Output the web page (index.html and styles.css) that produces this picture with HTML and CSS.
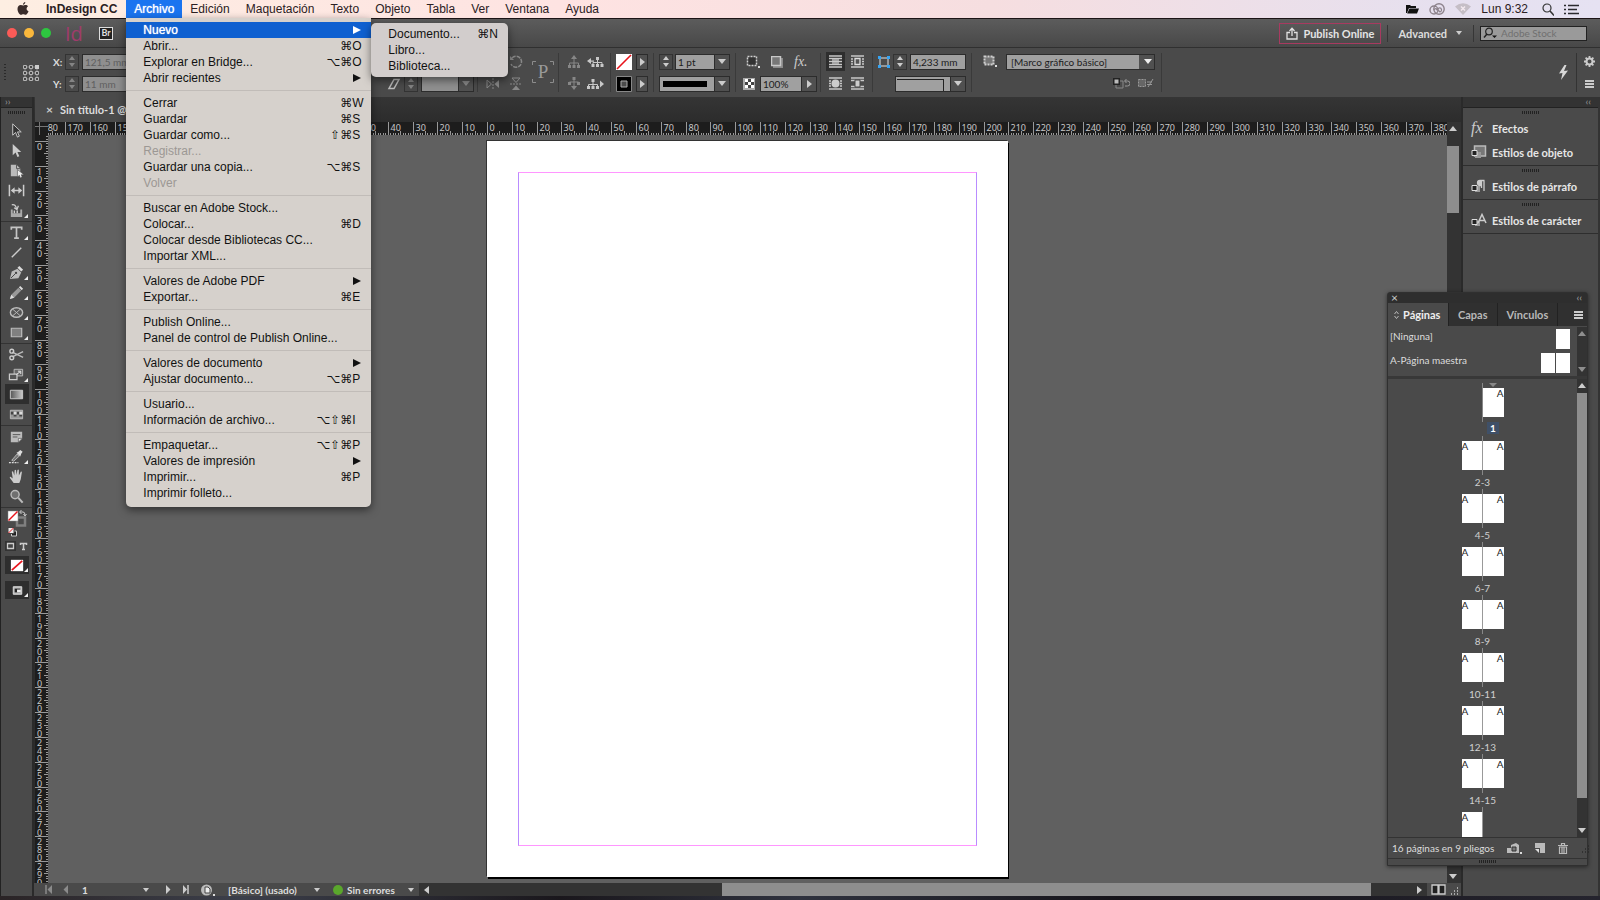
FILE: index.html
```
<!DOCTYPE html>
<html lang="es">
<head>
    <meta charset="UTF-8">
    <meta name="viewport" content="width=device-width, initial-scale=1.0">
    <title>InDesign CC</title>
    <link rel="stylesheet" href="styles.css">
</head>
<body>
    <header class="menubar">
        <svg class="apple" width="12" height="14" viewBox="0 0 12 14"><path d="M8.3 0c.1 1.300-1 2.600-2.300 2.700C5.900 1.500 7 .2 8.300 0zM6.200 3.500c.6 0 1.300-.6 2.400-.6 1 0 1.900.5 2.500 1.300-2.200 1.300-1.800 4.200.4 5-.5 1.500-1.700 3.500-2.900 3.500-.9 0-1.200-.5-2.300-.5s-1.400.5-2.300.5C2.500 12.700.5 9.500.5 6.900.5 4.400 2.100 3 3.700 3c1.100 0 1.900.5 2.500.5z" fill="#3a2c2a"/></svg>
        <nav class="menus">
            <button class="menu-title app">InDesign CC</button>
            <div class="menu-wrap">
                <button class="menu-title active">Archivo</button>
                <div class="menu file-menu">
                    <button class="item selected">Nuevo<i class="arrow"></i></button>
                    <button class="item">Abrir...<kbd>⌘<b>O</b></kbd></button>
                    <button class="item">Explorar en Bridge...<kbd>⌥⌘<b>O</b></kbd></button>
                    <button class="item">Abrir recientes<i class="arrow"></i></button>
                    <hr>
                    <button class="item">Cerrar<kbd>⌘<b>W</b></kbd></button>
                    <button class="item">Guardar<kbd>⌘<b>S</b></kbd></button>
                    <button class="item">Guardar como...<kbd>⇧⌘<b>S</b></kbd></button>
                    <button class="item" disabled>Registrar...</button>
                    <button class="item">Guardar una copia...<kbd>⌥⌘<b>S</b></kbd></button>
                    <button class="item" disabled>Volver</button>
                    <hr>
                    <button class="item">Buscar en Adobe Stock...</button>
                    <button class="item">Colocar...<kbd>⌘<b>D</b></kbd></button>
                    <button class="item">Colocar desde Bibliotecas CC...</button>
                    <button class="item">Importar XML...</button>
                    <hr>
                    <button class="item">Valores de Adobe PDF<i class="arrow"></i></button>
                    <button class="item">Exportar...<kbd>⌘<b>E</b></kbd></button>
                    <hr>
                    <button class="item">Publish Online...</button>
                    <button class="item">Panel de control de Publish Online...</button>
                    <hr>
                    <button class="item">Valores de documento<i class="arrow"></i></button>
                    <button class="item">Ajustar documento...<kbd>⌥⌘<b>P</b></kbd></button>
                    <hr>
                    <button class="item">Usuario...</button>
                    <button class="item">Información de archivo...<kbd>⌥⇧⌘<b>I</b></kbd></button>
                    <hr>
                    <button class="item">Empaquetar...<kbd>⌥⇧⌘<b>P</b></kbd></button>
                    <button class="item">Valores de impresión<i class="arrow"></i></button>
                    <button class="item">Imprimir...<kbd>⌘<b>P</b></kbd></button>
                    <button class="item">Imprimir folleto...</button>
                </div>
                <div class="menu submenu">
                    <button class="item">Documento...<kbd>⌘<b>N</b></kbd></button>
                    <button class="item">Libro...</button>
                    <button class="item">Biblioteca...</button>
                </div>
            </div>
            <button class="menu-title">Edición</button>
            <button class="menu-title">Maquetación</button>
            <button class="menu-title">Texto</button>
            <button class="menu-title">Objeto</button>
            <button class="menu-title">Tabla</button>
            <button class="menu-title">Ver</button>
            <button class="menu-title">Ventana</button>
            <button class="menu-title">Ayuda</button>
        </nav>
        <div class="tray">
            <svg width="13" height="10" viewBox="0 0 13 10"><path d="M0 9V1h4l1 1h5v2H3L1 9zM3.500 4.500H13L11 9.500H1.200z" fill="#111"/></svg>
            <svg width="16" height="12" viewBox="0 0 16 12"><circle cx="10" cy="6" r="5.200" fill="none" stroke="#8d838c" stroke-width="1.400"/><circle cx="5" cy="7" r="4" fill="none" stroke="#8d838c" stroke-width="1.400"/><path d="M5 7a2 2 0 0 1 3-1l3 3M7 7l3-2a2 2 0 1 1 1 4" fill="none" stroke="#8d838c" stroke-width="1.200"/></svg>
            <svg width="16" height="12" viewBox="0 0 16 12"><path d="M0 3.500Q8-3 16 3.500L8 12z" fill="#c5bec6"/><path d="M6 3.500l4 4m0-4l-4 4" stroke="#f4eaf0" stroke-width="1.400"/></svg>
            <span class="clock">Lun 9:32</span>
            <svg width="12" height="13" viewBox="0 0 12 13"><circle cx="5" cy="5" r="4" fill="none" stroke="#333" stroke-width="1.200"/><path d="M8 8l4 4.500" stroke="#333" stroke-width="1.500"/></svg>
            <svg width="16" height="11" viewBox="0 0 16 11"><path d="M0 1.500h2M4 1.500h11M0 5.500h2M4 5.500h9M0 9.500h2M4 9.500h11" stroke="#2a2a2e" stroke-width="1.600"/></svg>
        </div>
    </header>

    <div class="appbar">
        <span class="light red"></span><span class="light yellow"></span><span class="light green"></span>
        <span class="logo">Id</span>
        <button class="bridge">Br</button>
        <span class="spacer"></span>
        <button class="publish">
            <svg width="12" height="13" viewBox="0 0 12 13"><path d="M4 5.500H1v6.500h10V5.500H8M6 9V2M3.500 4L6 1.300 8.500 4" fill="none" stroke="#e0e0e0" stroke-width="1.300"/></svg>
            Publish Online
        </button>
        <span class="divider"></span>
        <button class="workspace-name">Advanced <i class="down small"></i></button>
        <span class="divider"></span>
        <label class="stock">
            <svg width="14" height="12" viewBox="0 0 14 12"><circle cx="6" cy="4.500" r="3.300" fill="none" stroke="#222" stroke-width="1.200"/><path d="M4 7L1 10.500" stroke="#222" stroke-width="1.500"/><path d="M9 8.500h5l-2.500 2.500z" fill="#111"/></svg>
            <input type="text" placeholder="Adobe Stock" aria-label="Adobe Stock">
        </label>
    </div>

    <div class="controlbar">
        <div class="ref">
            <i class="grip-v"></i>
            <svg width="18" height="18" viewBox="0 0 18 18"><path d="M3 3h12v12H3zM9 3v12M3 9h12" fill="none" stroke="#8c8c8c"/><g fill="#484848" stroke="#b4b4b4"><path d="M1.500 1.500h3v3h-3zM7.500 1.500h3v3h-3zM1.500 7.500h3v3h-3zM7.500 7.500h3v3h-3zM13.500 7.500h3v3h-3zM1.500 13.500h3v3h-3zM7.500 13.500h3v3h-3zM13.500 13.500h3v3h-3z"/></g><path d="M13 1h4v4h-4z" fill="#ccc"/></svg>
        </div>
        <div class="group position">
            <div class="row"><label for="px">X:</label><span class="step off"><i></i><i></i></span><input id="px" class="field" disabled value="121,5 mm"></div>
            <div class="row"><label for="py">Y:</label><span class="step off"><i></i><i></i></span><input id="py" class="field" disabled value="11 mm"></div>
        </div>
        <div class="group shear">
            <div class="row"></div>
            <div class="row">
                <svg width="14" height="12" viewBox="0 0 14 12"><path d="M2 10.500h5L12 1.500H7z" fill="none" stroke="#bbb" stroke-width="1.500"/></svg>
                <span class="step off"><i></i><i></i></span><span class="combo"><input class="field w38" disabled aria-label="Distorsión"><button class="drop off"><i class="down"></i></button></span>
            </div>
        </div>
        <div class="group flips">
            <div class="stack">
                <div class="row"><svg width="14" height="14" viewBox="0 0 14 14"></svg></div>
                <div class="row"><svg width="14" height="14" viewBox="0 0 14 14"><path d="M7 1v12" stroke="#888" stroke-dasharray="2 1"/><path d="M1 3l4.500 4L1 11z" fill="none" stroke="#888"/><path d="M13 3L8.500 7l4.500 4z" fill="#888"/></svg></div>
            </div>
            <div class="stack">
                <div class="row"><svg width="14" height="14" viewBox="0 0 14 14"><path d="M3 3a5.500 5.500 0 1 1-1 6" fill="none" stroke="#888" stroke-width="1.500" stroke-dasharray="4 1"/><path d="M1 1v4h4z" fill="#888"/></svg></div>
                <div class="row"><svg width="14" height="14" viewBox="0 0 14 14"><path d="M1 7h12" stroke="#888" stroke-dasharray="2 1"/><path d="M3 1l4 4.500L11 1z" fill="none" stroke="#888"/><path d="M3 13l4-4.500 4 4.500z" fill="#888"/></svg></div>
            </div>
            <svg class="big-p" width="22" height="22" viewBox="0 0 22 22"><path d="M.5 4V.5H4M18 .5h3.500V4M.5 18v3.500H4M18 21.500h3.500V18" fill="none" stroke="#8c8c8c"/><text x="11" y="17" text-anchor="middle">P</text></svg>
        </div>
        <div class="group trees">
            <div class="row">
                <svg class="dim" width="12" height="13" viewBox="0 0 12 13"><path d="M6 3v5M1.500 11V8h9v3M6 8v3" fill="none" stroke="#c4c4c4"/><path d="M3 4l3-4 3 4zM0 10h3v3H0zM4.500 10h3v3h-3zM9 10h3v3H9z" fill="#c4c4c4"/></svg>
                <svg width="17" height="12" viewBox="0 0 17 12"><path d="M10.500 3v4M6 9V6.500h9V9M10.500 6v3" fill="none" stroke="#c8c8c8"/><path d="M9 1h3v3H9zM4.500 8h3v3h-3zM9 8h3v3H9zM13.500 8h3v3h-3zM0 5l4-3v6zM3 4.500h4v1.300H3z" fill="#c8c8c8"/></svg>
            </div>
            <div class="row">
                <svg class="dim" width="12" height="13" viewBox="0 0 12 13"><path d="M6 1v8M1.500 7V5h9v2" fill="none" stroke="#c4c4c4"/><path d="M3 9l3 4 3-4zM0 5h3v3H0zM4.500 0h3v3h-3zM9 5h3v3H9z" fill="#c4c4c4"/></svg>
                <svg width="17" height="12" viewBox="0 0 17 12"><path d="M6 3v4M1.500 9V6.500h9V9M6 6v3" fill="none" stroke="#c8c8c8"/><path d="M4.500 1h3v3h-3zM0 8h3v3H0zM4.500 8h3v3h-3zM9 8h3v3H9zM17 6l-4-3.500v7z" fill="#c8c8c8"/></svg>
            </div>
        </div>
        <div class="group swatches">
            <div class="row"><svg width="16" height="16" viewBox="0 0 16 16"><path d="M0 0h16v16H0z" fill="#fff"/><path d="M1 15L15 1" stroke="#e8141c" stroke-width="1.600"/></svg><button class="drop narrow"><i class="right"></i></button></div>
            <div class="row"><svg width="16" height="16" viewBox="0 0 16 16"><path d="M.5.5h15v15H.5z" fill="#000" stroke="#888"/><path d="M5 5h6v6H5z" fill="#4a4a4a" stroke="#aaa"/></svg><button class="drop narrow"><i class="right"></i></button></div>
        </div>
        <div class="group weight">
            <div class="row"><span class="step"><i></i><i></i></span><span class="combo"><input class="field w40" value="1 pt" aria-label="Grosor"><button class="drop"><i class="down"></i></button></span></div>
            <div class="row"><span class="combo"><span class="field w56 stroke-style"></span><button class="drop"><i class="down"></i></button></span></div>
        </div>
        <div class="group effects">
            <div class="row">
                <svg width="14" height="14" viewBox="0 0 14 14"><path d="M1.500 1.500h9v9h-9z" fill="#333" stroke="#d0d0d0" stroke-width="1.500" stroke-dasharray="2 1"/><path d="M12 11h2v2h-2z" fill="#ddd"/></svg>
                <svg width="12" height="12" viewBox="0 0 12 12"><path d="M2 2h10v10H2z" fill="#8a8a8a"/><path d="M.5.5h9v9h-9z" fill="#777" stroke="#c8c8c8" stroke-width="1.500"/></svg>
                <span class="fx">fx.</span>
            </div>
            <div class="row">
                <svg width="12" height="12" viewBox="0 0 12 12"><path d="M0 0h12v12H0z" fill="#aaa"/><path d="M2 1h3v3H2zM8 1h3v3H8zM5 4h3v3H5zM2 7h3v3H2zM8 7h3v3H8z" fill="#fff"/><path d="M5 1h3v3H5zM2 4h3v3H2zM8 4h3v3H8zM5 7h3v3H5z" fill="#444"/></svg>
                <span class="combo"><input class="field w42" value="100%" aria-label="Opacidad"><button class="drop"><i class="right"></i></button></span>
            </div>
        </div>
        <div class="group wraps">
            <div class="row">
                <button class="tb on"><svg width="13" height="13" viewBox="0 0 13 13"><path d="M3 3h7v6H3z" fill="#999"/><path d="M0 1h13M0 3.500h13M0 6.500h13M0 9.500h13M0 12h13" stroke="#c8c8c8" stroke-width="1.300"/></svg></button>
                <button class="tb"><svg width="13" height="13" viewBox="0 0 13 13"><path d="M0 1h13M0 12h13M0 4h2M0 6.500h2M0 9h2M11 4h2M11 6.500h2M11 9h2" stroke="#c8c8c8" stroke-width="1.300"/><path d="M4 3.500h5v6H4z" fill="#555" stroke="#ddd" stroke-width="1.300"/></svg></button>
            </div>
            <div class="row">
                <button class="tb"><svg width="13" height="13" viewBox="0 0 13 13"><path d="M0 1h13M0 12h13M0 4h2M0 6.500h2M0 9h2M11 4h2M11 6.500h2M11 9h2" stroke="#c8c8c8" stroke-width="1.300"/><circle cx="6.500" cy="6.500" r="4" fill="#ccc"/></svg></button>
                <button class="tb"><svg width="13" height="13" viewBox="0 0 13 13"><path d="M0 1h13M0 3.500h13M0 9.500h13M0 12h13" stroke="#c8c8c8" stroke-width="1.300"/><path d="M4 3h5v7H4z" fill="#ccc" stroke="#444"/></svg></button>
            </div>
        </div>
        <div class="group corners">
            <div class="row">
                <svg width="12" height="12" viewBox="0 0 12 12"><path d="M2 2h8v8H2z" fill="none" stroke="#b0b0b0" stroke-width="1.500"/><path d="M0 0h3v3H0zM9 0h3v3H9zM0 9h3v3H0zM9 9h3v3H9z" fill="#35a4f4"/></svg>
                <span class="step"><i></i><i></i></span><input class="field w56" value="4,233 mm" aria-label="Tamaño de esquina">
            </div>
            <div class="row end"><span class="combo"><span class="field w56 corner-shape"></span><button class="drop"><i class="down"></i></button></span></div>
        </div>
        <div class="group styles">
            <div class="row">
                <svg width="14" height="13" viewBox="0 0 14 13"><path d="M1.500 1.500h9v8h-9z" fill="#777" stroke="#d0d0d0" stroke-width="2" stroke-dasharray="2 1"/><path d="M12 10h2v2h-2z" fill="#ddd"/></svg>
                <select class="field style-select" aria-label="Estilo de objeto"><option>[Marco gráfico básico]</option></select>
            </div>
            <div class="row end">
                <svg width="17" height="11" viewBox="0 0 17 11"><path d="M3 3h7v7H3z" fill="none" stroke="#888"/><path d="M0 0h7v7H0z" fill="#222"/><path d="M1.500 1.500h4v4h-4z" fill="#bbb"/><path d="M12 3h2.500a2 2 0 0 1 0 5H12M13.500 1L11.500 3l2 2" fill="none" stroke="#999"/></svg>
                <svg width="16" height="11" viewBox="0 0 16 11"><path d="M.5 1.500h7v7h-7z" fill="#666" stroke="#999" stroke-dasharray="2 1"/><path d="M9 4h5M9 6.500h5M15 1l-5 8" stroke="#999"/></svg>
            </div>
        </div>
        <span class="spacer"></span>
        <svg class="bolt" width="11" height="15" viewBox="0 0 11 15"><path d="M6.500 0L1 8.500l3.500-.5L3 15 10 5.500l-4 .5L8.500 0z" fill="#d8d8d8"/></svg>
        <div class="group last">
            <div class="row"><svg width="11" height="11" viewBox="0 0 11 11"><circle cx="5.500" cy="5.500" r="3" fill="none" stroke="#ccc" stroke-width="2"/><path d="M5.500 0v2.500M5.500 8.500V11M0 5.500h2.500M8.500 5.500H11M1.600 1.600l1.800 1.800M7.600 7.600l1.800 1.800M9.400 1.600L7.600 3.400M3.400 7.600L1.600 9.400" stroke="#ccc" stroke-width="1.800"/></svg></div>
            <div class="row"><i class="burger"></i></div>
        </div>
    </div>

    <main class="workspace">
        <aside class="tools">
            <div class="dock-head start">››</div>
            <i class="grip"></i>
            <div class="tool-group">
                <button class="tool"><svg viewBox="0 0 18 18"><path d="M5 2v12l3-3 2 5 2-1-2-4.500h4z" fill="#333" stroke="#ccc"/></svg></button>
                <button class="tool"><svg viewBox="0 0 18 18"><path d="M5 2v12l3-3 2 5 2-1-2-4.500h4z" fill="#ccc"/></svg></button>
                <button class="tool"><svg viewBox="0 0 18 18"><path d="M3 3h6l4 4v8H3z" fill="#bbb"/><path d="M9 3v4h4" fill="none" stroke="#555"/><path d="M10 8v8l2-2 1 3 2-1-1-2.500h3z" fill="#eee" stroke="#444" stroke-width=".6"/></svg></button>
                <button class="tool"><svg viewBox="0 0 18 18"><path d="M1.500 3v12M16.500 3v12M4 9h10" stroke="#ccc" stroke-width="1.600"/><path d="M3 9l4-3.500v7zM15 9l-4-3.500v7z" fill="#ccc"/></svg></button>
                <button class="tool more"><svg viewBox="0 0 18 18"><path d="M3 8v8h12V8h-2v4H5V8z" fill="#aaa"/><path d="M6 9h1.500v3H6zM9 9h1.500v3H9z" fill="#ccc"/><path d="M4 3q4-1 5 4M6.500 6l3 2L11 4" fill="none" stroke="#ccc" stroke-width="1.300"/></svg></button>
            </div>
            <div class="tool-group">
                <button class="tool more"><svg viewBox="0 0 18 18"><path d="M3.500 6V3.500h11V6M9 3.500V15M6.500 15h5" fill="none" stroke="#c4c4c4" stroke-width="1.800"/></svg></button>
                <button class="tool"><svg viewBox="0 0 18 18"><path d="M4 14L14 4" stroke="#ccc" stroke-width="1.500"/></svg></button>
                <button class="tool more"><svg viewBox="0 0 18 18"><path d="M2 16l2-8 6-3 4 4-3 6z" fill="#bbb"/><path d="M10 4l2-2 4 4-2 2z" fill="#ddd"/><path d="M3 15l5-5" stroke="#444"/><circle cx="8.500" cy="9.500" r="1.200" fill="#444"/></svg></button>
                <button class="tool more"><svg viewBox="0 0 18 18"><path d="M2 16l1.500-4.500L11 4l3 3-7.500 7.500z" fill="#999"/><path d="M11.500 3.500L13 2l3 3-1.500 1.500zM2 16l1.500-4.500 3 3z" fill="#ddd"/></svg></button>
                <button class="tool more"><svg viewBox="0 0 18 18"><ellipse cx="9" cy="9" rx="6.500" ry="5" fill="#555" stroke="#bbb" stroke-width="1.500"/><path d="M5 5.500l8 7M13 5.500l-8 7" stroke="#bbb"/></svg></button>
                <button class="tool more"><svg viewBox="0 0 18 18"><path d="M3.500 4.500h11v9h-11z" fill="#808080" stroke="#bbb" stroke-width="1.300"/></svg></button>
            </div>
            <div class="tool-group">
                <button class="tool"><svg viewBox="0 0 18 18"><path d="M4.500 6.500L16 12M4.500 11.500L16 6" stroke="#bbb" stroke-width="1.500"/><circle cx="4" cy="5.500" r="2" fill="none" stroke="#ccc" stroke-width="1.500"/><circle cx="4" cy="12.500" r="2" fill="none" stroke="#ccc" stroke-width="1.500"/></svg></button>
                <button class="tool more"><svg viewBox="0 0 18 18"><path d="M6.500 3.500h9v7h-9z" fill="#666" stroke="#bbb"/><path d="M1.500 8.500h8v6h-8z" fill="#555" stroke="#ccc" stroke-width="1.300"/><path d="M9 9l4-3M10.500 5.500H13.500V8.500" stroke="#eee" fill="none"/></svg></button>
                <button class="tool on"><svg viewBox="0 0 18 18"><defs><linearGradient id="gr"><stop offset="0" stop-color="#555"/><stop offset="1" stop-color="#ccc"/></linearGradient></defs><path d="M2.500 4.500h13v9h-13z" fill="url(#gr)" stroke="#ccc"/></svg></button>
                <button class="tool"><svg viewBox="0 0 18 18"><path d="M2.500 4.500h13v9h-13z" fill="#999" stroke="#bbb"/><path d="M3 6h3v3H3zM9 6h3v3H9zM6 9h3v2H6zM12 9h3v2h-3z" fill="#444"/><path d="M6 6h3v3H6zM12 6h3v3h-3z" fill="#ddd"/></svg></button>
            </div>
            <div class="tool-group">
                <button class="tool"><svg viewBox="0 0 18 18"><path d="M3 4h12v7l-4 4H3z" fill="#bbb"/><path d="M5 7h8M5 9.500h5" stroke="#555"/><path d="M11 15v-4h4z" fill="#eee" stroke="#555" stroke-width=".7"/></svg></button>
                <button class="tool more"><svg viewBox="0 0 18 18"><path d="M4 13l5.500-6.500 2.500 2L6 14z" fill="#777" stroke="#bbb"/><path d="M9 5l2-1 2-2 2.500 2-1.500 2-1 3z" fill="#ddd"/><path d="M1 15.500h10" stroke="#ddd" stroke-width="1.500" stroke-dasharray="2 1"/></svg></button>
                <button class="tool"><svg viewBox="0 0 18 18"><path d="M6 16l-4-5.500q-.5-1.500 1-1l2 1.500L4 4q.8-1.300 1.500 0l1.200 4L7 2.500q1-1.200 1.500 0L9 7.500l1-5.500q1-1 1.500 0L11.500 8 13.500 4q1.300-.6 1.200.5L13.500 12 12 16z" fill="#ccc"/></svg></button>
                <button class="tool"><svg viewBox="0 0 18 18"><circle cx="7.500" cy="7" r="4.300" fill="#707070" stroke="#bbb" stroke-width="1.500"/><path d="M11 10.500l4.500 5" stroke="#bbb" stroke-width="2.200"/></svg></button>
            </div>
            <svg class="fillstroke" width="28" height="46" viewBox="0 0 28 46">
                <path d="M12 8.500h8v8h-8z" fill="none" stroke="#808080" stroke-width="2.500"/><path d="M3 2h10v10H3z" fill="#fff" stroke="#888" stroke-width=".5"/><path d="M3.500 11.500l9-9" stroke="#e8141c" stroke-width="1.500"/><path d="M15 3h3q2 0 2 3M16.500 1L14.500 3l2 2M18.500 5L20 7l1.500-2" fill="none" stroke="#ccc"/>
                <path d="M6.500 22h5v5h-5z" fill="#222" stroke="#ccc"/><path d="M3 18.500h6v6H3z" fill="#eee" stroke="#444"/><path d="M3.500 24l5-5" stroke="#e8141c"/>
                <path d="M0 32h11v10H0z" fill="#333"/><path d="M2.500 34.500h6v5h-6z" fill="#444" stroke="#ccc" stroke-width="1.300"/><path d="M15.500 36v-1.500h6V36M18.500 34.500v6M17 40.500h3" fill="none" stroke="#ccc" stroke-width="1.500"/>
            </svg>
            <button class="tool on big more"><svg viewBox="0 0 18 18"><path d="M2 3h13v12H2z" fill="#fff"/><path d="M3 14L14 4" stroke="#e8141c" stroke-width="1.800"/></svg></button>
            <button class="tool on big more"><svg viewBox="0 0 18 18"><path d="M4.500 5h9v8h-9z" fill="#bbb" stroke="#ddd"/><path d="M6 7h6v4H6z" fill="#222"/><path d="M8.500 8h4v3h-4z" fill="#eee"/></svg></button>
        </aside>

        <section class="doc">
            <div class="tabs"><div class="tab"><button class="close">×</button>Sin título-1 @ 75%</div></div>
            <div class="canvas-grid">
                <div class="corner"></div>
                <svg class="ruler-h" id="rulerH"></svg>
                <svg class="ruler-v" id="rulerV"></svg>
                <div class="canvas"><div class="page" id="page"><div class="margins"></div></div></div>
                <div class="vscroll"><i class="up"></i><i class="thumb"></i><i class="spacer"></i><i class="down"></i></div>
            </div>
            <div class="status">
                <div class="status-left">
                    <svg class="dim" width="24" height="9" viewBox="0 0 24 9"><path d="M1 0v9" stroke="#ccc" stroke-width="1.500"/><path d="M7 0v9L2.500 4.500zM23 0v9l-4.500-4.500z" fill="#ccc"/></svg>
                    <span class="pick page-no"><select aria-label="Página"><option>1</option></select><i class="down small"></i></span>
                    <svg width="24" height="9" viewBox="0 0 24 9"><path d="M1 0v9l4.500-4.500zM18 0v9l4-4.500z" fill="#ccc"/><path d="M23 0v9" stroke="#ccc" stroke-width="1.500"/></svg>
                    <svg class="check" width="14" height="12" viewBox="0 0 14 12"><circle cx="5.500" cy="6" r="5.500" fill="#bbb"/><path d="M4 3h3l2 2v4H4z" fill="#eee" stroke="#444"/><path d="M12 10h2v2h-2z" fill="#ddd"/></svg>
                    <span class="pick preflight"><select aria-label="Perfil"><option>[Básico] (usado)</option></select><i class="down small"></i></span>
                    <i class="ok"></i>
                    <span class="pick errors"><select aria-label="Comprobación"><option>Sin errores</option></select><i class="down small"></i></span>
                </div>
                <div class="hscroll"><i class="left"></i><i class="thumb"></i><i class="right"></i></div>
                <svg width="28" height="11" viewBox="0 0 28 11"><path d="M1 1h6v9H1zM8 1h6v9H8z" fill="#222" stroke="#ccc" stroke-width="1.300"/><path d="M20 10h1m2 0h1m2 0h1M23 7h1m2 0h1M26 4h1" stroke="#aaa" stroke-width="2"/></svg>
            </div>
        </section>

        <aside class="dock">
            <div class="dock-head">‹‹</div>
            <div class="dock-section">
                <i class="grip"></i>
                <button class="dock-item"><span class="fx">fx</span>Efectos</button>
                <button class="dock-item"><svg width="16" height="14" viewBox="0 0 16 14"><path d="M3.500 1h11v10h-11z" fill="#777" stroke="#bbb" stroke-width="1.500"/><path d="M4 7h6v6H4z" fill="#999"/><path d="M1 5.500h5v5H1z" fill="#222" stroke="#ddd"/></svg>Estilos de objeto</button>
            </div>
            <div class="dock-section">
                <i class="grip"></i>
                <button class="dock-item"><svg width="16" height="14" viewBox="0 0 16 14"><path d="M4 7h5v6H4z" fill="#999"/><path d="M1 6.500h5v5H1z" fill="#222" stroke="#ddd"/><path d="M10.500 1.500H9a2.500 2.500 0 0 0 0 5h1.500zM10.500 1V9M10 1.500h3.500M13 1.500V12" fill="#ccc" stroke="#ccc" stroke-width="1.300"/></svg>Estilos de párrafo</button>
            </div>
            <div class="dock-section">
                <i class="grip"></i>
                <button class="dock-item"><svg width="16" height="14" viewBox="0 0 16 14"><path d="M4 8h5v5H4z" fill="#999"/><path d="M1 6.500h5v5H1z" fill="#222" stroke="#ddd"/><path d="M7 10l4-8.500 4 8.500M8.500 7.500h5" fill="none" stroke="#ccc" stroke-width="1.500"/></svg>Estilos de carácter</button>
            </div>
        </aside>

        <section class="pages-panel">
            <div class="panel-head"><button class="close">×</button><span>‹‹</span></div>
            <div class="panel-tabs">
                <button class="ptab current"><svg width="5" height="8" viewBox="0 0 5 8"><path d="M.5 3l2-2.500 2 2.500M.5 5l2 2.500 2-2.500" fill="none" stroke="#bbb"/></svg>Páginas</button>
                <button class="ptab">Capas</button>
                <button class="ptab">Vínculos</button>
                <i class="burger"></i>
            </div>
            <div class="masters">
                <div class="master-list">
                    <div class="master">[Ninguna]<span class="thumbs"><i></i></span></div>
                    <div class="master">A-Página maestra<span class="thumbs"><i></i><i></i></span></div>
                </div>
                <div class="pscroll"><i class="up"></i><i class="spacer"></i><i class="down"></i></div>
            </div>
            <div class="spreads-wrap">
                <div class="spreads" id="spreads"></div>
                <div class="pscroll"><i class="up"></i><i class="thumb"></i><i class="spacer"></i><i class="down"></i></div>
            </div>
            <div class="panel-foot">
                <span>16 páginas en 9 pliegos</span>
                <svg width="15" height="11" viewBox="0 0 15 11"><path d="M0 5h5v5H0zM4 2l5-2 3 2v8H4z" fill="#bbb"/><path d="M5 4h4v4H5z" fill="#777" stroke="#333"/><path d="M13 9h2v2h-2z" fill="#ddd"/></svg>
                <svg width="10" height="10" viewBox="0 0 10 10"><path d="M0 0h10v10H5V5H0z" fill="#bbb"/><path d="M0 6l4 4V6z" fill="#ddd"/></svg>
                <svg width="10" height="11" viewBox="0 0 10 11"><path d="M0 2.500h10M3.500 2V.5h3V2" fill="none" stroke="#bbb" stroke-width="1.200"/><path d="M1.500 4h7v6.500h-7zM4 4v6M6 4v6" fill="none" stroke="#bbb" stroke-width="1.200"/></svg>
                <svg width="9" height="9" viewBox="0 0 9 9"><path d="M1 8h1m2 0h1m2 0h1M4 5h1m2 0h1M7 2h1" stroke="#2a2a2a" stroke-width="1.500"/></svg>
            </div>
            <div class="panel-base"><i class="grip"></i></div>
        </section>
    </main>
    <div class="wallpaper"></div>

    <script>
        const spreads = ['1', '2-3', '4-5', '6-7', '8-9', '10-11', '12-13', '14-15', ''];
        document.getElementById('spreads').innerHTML = spreads.map((label, i) => {
            const left = i > 0 ? '<i class="leaf">A</i>' : '<i class="gap"></i>';
            const right = i < 8 ? '<i class="leaf verso">A</i>' : '<i class="gap"></i>';
            return `<div class="spread${i === 0 ? ' first' : ''}"><div class="leaves">${left}${right}</div><span>${label}</span></div>`;
        }).join('');

        // pixels per millimetre at the current zoom
        const mm = 2.483;
        const drawRulers = () => {
            const page = document.getElementById('page').getBoundingClientRect();
            const h = document.getElementById('rulerH');
            const v = document.getElementById('rulerV');
            const hb = h.getBoundingClientRect();
            const vb = v.getBoundingClientRect();
            const tick = i => i % 10 === 0 ? 13 : i % 5 === 0 ? 4 : 2;
            let out = '';
            for (let i = -190; i < 400; i++) {
                const x = Math.round(page.left - hb.left + i * mm) + 0.5;
                if (x < -24 || x > hb.width) continue;
                out += `<line x1="${x}" x2="${x}" y1="${13 - tick(i)}" y2="13"/>`;
                if (i % 10 === 0) out += `<text x="${x + 2}" y="9">${Math.abs(i)}</text>`;
            }
            h.innerHTML = out;
            out = '';
            for (let i = -2; i < 300; i++) {
                const y = Math.round(page.top - vb.top + i * mm) + 0.5;
                if (y < 0 || y > vb.height) continue;
                out += `<line x1="${13 - tick(i)}" x2="13" y1="${y}" y2="${y}"/>`;
                if (i % 10 === 0) String(i).split('').forEach((d, n) => { out += `<text x="2" y="${y + 8 + n * 8}">${d}</text>`; });
            }
            v.innerHTML = out;
        };
        drawRulers();
        window.addEventListener('resize', drawRulers);
    </script>
</body>
</html>
```
FILE: styles.css
```
* { box-sizing: border-box; }
body { margin: 0; height: 100vh; display: flex; flex-direction: column; overflow: hidden; background: #2a2a2a; color: #ddd; font-family: Lato, sans-serif; font-size: 10px; }
button { font: inherit; color: inherit; background: none; border: 0; padding: 0; margin: 0; text-align: left; }
input, select { font: inherit; margin: 0; }
i { font-style: normal; }
svg { display: block; flex: none; }
.spacer { flex: 1; }

/* system menu bar */
.menubar { height: 19px; flex: none; display: flex; align-items: center; background: linear-gradient(90deg, #fdeee2, #fee3e2 35%, #f6dee0 62%, #e6e0ef 90%, #e6e2f2); color: #2b2023; font: 12px "Liberation Sans", sans-serif; border-bottom: 1px solid #1c1416; }
.apple { margin-left: 17px; margin-right: 9px; }
.menus { display: flex; height: 18px; }
.menu-title { height: 18px; padding: 0 8px; white-space: nowrap; }
.menu-title.app { font-weight: bold; padding-right: 9px; }
.menu-title.active { background: #1a74f0; color: #fff; text-shadow: 0 0 1px #fff; }
.menu-wrap { position: relative; }
.menu { position: absolute; z-index: 20; display: flex; flex-direction: column; background: #d6d1cc; color: #111; box-shadow: 0 3px 8px rgba(0,0,0,0.5); }
.file-menu { top: 18px; left: 0; width: 245px; padding: 4px 0 6px; border-radius: 0 0 5px 5px; }
.submenu { top: 23px; left: 245px; width: 137px; padding: 3px 0; border-radius: 5px; background: #d2cdcc; }
.item { display: flex; justify-content: space-between; align-items: center; height: 16px; padding: 0 10px 0 17px; white-space: nowrap; }
.item.selected { background: #0f60d0; color: #fff; text-shadow: 0 0 1px #fff; }
.item:disabled { color: #9c9894; }
.item kbd { font: 12px "DejaVu Sans", sans-serif; display: flex; align-items: center; }
.item kbd b { font: 12px "Liberation Sans", sans-serif; width: 9px; }
.item .arrow { border: 4px solid transparent; border-left: 8px solid #111; border-right: 0; }
.item.selected .arrow { border-left-color: #fff; }
.menu hr { width: 100%; height: 1px; border: 0; margin: 4px 0; background: #c1bcb8; }
.tray { margin-left: auto; margin-right: 20px; display: flex; align-items: center; gap: 10px; }
.clock { margin-right: 4px; }

/* application bar */
.appbar { height: 29px; flex: none; display: flex; align-items: center; padding: 0 13px 0 7px; background: linear-gradient(#5c5c5c, #484848); border-bottom: 1px solid #303030; }
.light { width: 10px; height: 10px; border-radius: 50%; margin-right: 7px; }
.red { background: #fb5b57; }
.yellow { background: #fbb83c; }
.green { background: #2ec640; }
.logo { font: 20px "Open Sans", sans-serif; color: #a03c6c; margin-left: 7px; width: 34px; }
.bridge { width: 14px; height: 13px; border: 1px solid #ddd; background: #222; font-size: 9px; font-weight: bold; line-height: 10px; text-align: center; }
.publish { display: flex; align-items: center; gap: 5px; height: 21px; padding: 0 6px; border: 1px solid #a83a60; font-size: 11px; color: #e4e4e4; font-weight: bold; }
.divider { width: 1px; height: 17px; background: #363636; margin: 0 6px; }
.workspace-name { display: flex; align-items: center; gap: 9px; font-size: 11px; font-weight: bold; padding: 0 5px 0 4px; }
.stock { display: flex; align-items: center; width: 107px; height: 15px; padding-left: 2px; background: #9a9a9a; border: 1px solid #222; }
.stock input { width: 80px; border: 0; background: none; padding: 0 0 0 4px; }
.stock input::placeholder { color: #707070; }

/* arrows */
.down, .up, .left, .right { width: 0; height: 0; border: 4px solid transparent; }
.down { border-top: 5px solid #ccc; border-bottom: 0; }
.up { border-bottom: 5px solid #ccc; border-top: 0; }
.left { border-right: 5px solid #ccc; border-left: 0; }
.right { border-left: 5px solid #ccc; border-right: 0; }
.down.small { border-width: 4px 3px 0; }
.burger { width: 9px; height: 8px; background: repeating-linear-gradient(#ccc 0 2px, transparent 2px 3px); }

/* control panel */
.controlbar { height: 49px; flex: none; display: flex; align-items: flex-start; padding-top: 5px; background: #4a4a4a; }
.ref { display: flex; align-items: center; gap: 16px; width: 48px; height: 39px; padding-left: 4px; }
.grip-v { width: 2px; height: 17px; background: repeating-linear-gradient(#2a2a2a 0 1px, transparent 1px 3px); }
.group { display: flex; flex-direction: column; gap: 5px; height: 39px; padding: 0 5px; border-right: 1px solid #3a3a3a; }
.row { display: flex; align-items: center; gap: 3px; height: 17px; }
.row.end { justify-content: flex-end; }
.position { width: 334px; border: 0; }
.position label { width: 9px; font-weight: bold; }
.shear { width: 96px; }
.flips { flex-direction: row; width: 81px; gap: 9px; padding-left: 8px; }
.stack { display: flex; flex-direction: column; gap: 5px; }
.big-p { margin-top: 8px; }
.big-p text { font: 19px "Liberation Serif", serif; fill: #999; }
.trees { width: 52px; padding-left: 9px; }
.trees .row { gap: 7px; }
.dim { opacity: 0.5; }
.swatches { width: 43px; }
.weight { width: 82px; }
.weight .row { gap: 2px; }
.effects { padding-left: 7px; width: 85px; }
.effects .row { gap: 5px; }
.effects .row:first-child { gap: 11px; padding-left: 3px; }
.fx { font: italic 14px "Liberation Serif", serif; color: #ccc; }
.wraps .row { gap: 4px; }
.wraps { width: 52px; }
.tb { width: 19px; height: 19px; display: grid; place-items: center; }
.on { background: #2e2e2e; }
.corners { width: 99px; }
.styles { width: 190px; padding-left: 11px; }
.styles .row { position: relative; }
.styles .row:first-child { gap: 9px; }
.styles .row:first-child::after { content: ""; position: absolute; right: 4px; top: 6px; border: 4px solid transparent; border-top: 5px solid #eee; border-bottom: 0; }
.styles .row.end { gap: 8px; padding-right: 2px; }
.step { width: 14px; height: 16px; flex: none; display: flex; flex-direction: column; align-items: center; justify-content: space-around; border: 1px solid #333; background: linear-gradient(#4a4a4a 47%, #333 47% 53%, #4a4a4a 53%); }
.step i { border: 3px solid transparent; border-bottom: 4px solid #ccc; border-top: 0; }
.step i + i { border-top: 4px solid #ccc; border-bottom: 0; }
.step.off i, .drop.off i { opacity: 0.45; }
.field { height: 16px; padding: 0 2px; border: 1px solid #2c2c2c; border-radius: 0; background: #a0a0a0; color: #1c1c1c; font-size: 10px; }
.field:disabled { background: #8f8f8f; color: #606060; }
.position .field { width: 66px; }
.w38 { width: 38px; }
.w40 { width: 40px; }
.w42 { width: 42px; }
.w56 { width: 56px; }
.combo { display: flex; }
.drop { width: 15px; height: 16px; display: grid; place-items: center; border: 1px solid #2c2c2c; border-left: 0; background: #505050; }
.drop.narrow { width: 13px; border-left: 1px solid #2c2c2c; }
.swatches .row { gap: 4px; }
.stroke-style { padding: 4px 3px; }
.stroke-style::before { content: ""; display: block; height: 6px; width: 44px; background: #000; }
.corner-shape { padding: 2px 6px 0 1px; }
.corner-shape::before { content: ""; display: block; height: 11px; border: 1px solid #222; border-left: 0; border-bottom: 0; }
.style-select { width: 149px; padding: 0 4px; appearance: none; background: linear-gradient(#505050, #505050) right / 15px 100% no-repeat #a0a0a0; }
.bolt { margin: 12px 7px 0 0; }
.last { border-right: 0; border-left: 1px solid #333; width: 24px; padding-left: 6px; align-items: center; }

/* workspace */
.workspace { position: relative; flex: 1; min-height: 0; display: flex; background: #2c2c2c; }
.tools { width: 34px; flex: none; display: flex; flex-direction: column; background: #4a4a4a; border-left: 1px solid #222; border-right: 2px solid #2a2a2a; }
.dock-head { height: 11px; flex: none; background: #333; color: #999; line-height: 9px; font-size: 10px; text-align: right; padding: 0 7px; border-bottom: 1px solid #222; }
.dock-head.start { text-align: left; padding: 0 4px; }
.grip { display: block; width: 17px; height: 3px; margin: 3px auto 0; background: repeating-linear-gradient(90deg, #222 0 1px, transparent 1px 2px); }
.tools .grip { margin: 3px 0 6px 7px; }
.tool-group { display: flex; flex-direction: column; align-items: center; padding-bottom: 1px; border-bottom: 1px solid #333; }
.tool { position: relative; width: 24px; height: 20px; display: grid; place-items: center; }
.tool svg { width: 17px; height: 17px; }
.more::after { content: ""; position: absolute; right: 1px; bottom: 2px; border-left: 4px solid transparent; border-bottom: 4px solid #eee; }
.fillstroke { margin: 1px 0 0 4px; }
.tool.big { margin: 1px 0 6px 4px; height: 18px; }
.doc { flex: 1; min-width: 0; display: flex; flex-direction: column; background: #2c2c2c; }
.tabs { height: 25px; flex: none; display: flex; background: linear-gradient(#353535, #2c2c2c); padding-left: 1px; }
.tab { display: flex; align-items: center; gap: 7px; width: 130px; padding-left: 11px; background: #4a4a4a; font-size: 11px; font-weight: bold; white-space: nowrap; }
.close { font-size: 12px; line-height: 10px; color: #ccc; }
.canvas-grid { flex: 1; min-height: 0; display: grid; grid-template: 13px 1fr / 13px 1fr 14px; padding-left: 1px; }
.corner { background: linear-gradient(#777, #777) 4px 0 / 1px 100% no-repeat, linear-gradient(#777, #777) 0 4px / 100% 1px no-repeat #1d1d1d; }
.ruler-h, .ruler-v { width: 100%; height: 100%; background: #1d1d1d; overflow: hidden; }
.ruler-h line, .ruler-v line { stroke: #999; stroke-width: 1; shape-rendering: crispEdges; }
.ruler-h text, .ruler-v text { fill: #c8c8c8; font: 9px "Noto Sans", sans-serif; }
.canvas { background: #606060; display: flex; justify-content: center; align-items: flex-start; padding-top: 6px; min-height: 0; overflow: hidden; }
.page { width: 521px; height: 736px; flex: none; padding: 31px; background: #fff; box-shadow: -1px -1px 0 #333, 1px 2px 0 #000; }
.margins { height: 100%; border: 1px solid; border-color: #ff96ff #b98cff; }
.vscroll { grid-row: 1 / 3; grid-column: 3; background: #333; display: flex; flex-direction: column; align-items: center; padding: 4px 2px 4px 0; }
.vscroll .thumb { width: 12px; height: 67px; margin-top: 15px; background: #8e8e8e; }

/* status bar */
.status { height: 13px; flex: none; display: flex; align-items: center; gap: 4px; padding: 0 2px 0 11px; background: #4a4a4a; }
.status-left { display: flex; align-items: center; width: 370px; flex: none; }
.pick { display: flex; align-items: center; justify-content: space-between; }
.pick select { appearance: none; border: 0; padding: 0; height: 13px; background: none; color: #ddd; font-weight: bold; }
.page-no { width: 67px; margin: 0 16px 0 13px; }
.check { margin: 0 13px 0 12px; }
.preflight { width: 92px; margin-right: 13px; }
.ok { width: 10px; height: 10px; border-radius: 50%; background: #5aa72c; margin-right: 4px; }
.errors { width: 67px; }
.hscroll { flex: 1; height: 13px; display: flex; align-items: center; padding: 0 5px; background: #333; }
.hscroll .thumb { width: 65%; height: 13px; margin-left: auto; margin-right: 46px; background: #8e8e8e; }

/* right dock */
.dock { width: 139px; flex: none; background: #4a4a4a; border-left: 2px solid #2a2a2a; border-right: 2px solid #333; }
.dock-section { padding-bottom: 1px; border-bottom: 1px solid #2e2e2e; }
.dock .grip { margin-bottom: 2px; }
.dock-item { display: flex; align-items: center; gap: 5px; height: 24px; width: 100%; padding-left: 8px; font-size: 11px; font-weight: bold; color: #e6e6e6; white-space: nowrap; }
.dock-item svg, .dock-item .fx { width: 16px; }
.dock-item .fx { font-weight: normal; font-size: 16px; line-height: 20px; }

/* pages panel floats over the canvas */
.pages-panel { position: absolute; right: 12px; top: 195px; bottom: 30px; width: 201px; display: flex; flex-direction: column; background: #4a4a4a; border: 1px solid #303030; border-radius: 3px 3px 0 0; box-shadow: 0 1px 4px rgba(0,0,0,0.5); }
.panel-head { height: 10px; flex: none; display: flex; justify-content: space-between; padding: 0 5px 0 3px; background: #2e2e2e; color: #aaa; line-height: 9px; }
.panel-tabs { height: 23px; flex: none; display: flex; align-items: center; background: #303030; color: #b8b8b8; font-size: 11px; font-weight: bold; }
.ptab { height: 23px; padding: 0 9px; border-right: 1px solid #222; }
.ptab.current { display: flex; align-items: center; gap: 4px; width: 61px; padding: 0 6px; background: #4a4a4a; color: #eee; }
.panel-tabs .burger { margin-left: auto; margin-right: 4px; }
.masters { height: 53px; flex: none; display: flex; padding-top: 1px; border-bottom: 3px solid #383838; }
.master-list { flex: 1; padding-right: 7px; }
.master { display: flex; justify-content: space-between; height: 24px; padding: 2px 0 0 2px; line-height: 14px; }
.thumbs { display: flex; gap: 1px; }
.thumbs i { width: 14px; height: 20px; background: #fff; }
.pscroll { width: 10px; display: flex; flex-direction: column; align-items: center; padding: 4px 0; background: #333; }
.masters .pscroll i { opacity: 0.6; }
.pscroll .thumb { width: 10px; height: 405px; margin-top: 5px; background: #8e8e8e; }
.spreads-wrap { flex: 1; min-height: 0; display: flex; }
.spreads { flex: 1; overflow: hidden; padding-top: 4px; }
.spread { position: relative; height: 53px; display: flex; flex-direction: column; align-items: center; line-height: 14px; color: #d0d0d0; }
.leaves { display: flex; padding: 5px 0; background: linear-gradient(#888, #888) center / 1px 100% no-repeat; }
.leaf, .gap { width: 21px; height: 29px; }
.leaf { background: #fff; color: #222; line-height: 10px; border-right: 1px solid #999; }
.leaf.verso { text-align: right; border: 0; }
.first span { margin-left: 21px; padding: 0 3px; line-height: 12px; background: #3f5068; color: #fff; font-weight: bold; }
.first::before { content: ""; position: absolute; top: 0; left: 50%; margin-left: 6px; border: 4px solid transparent; border-top: 4px solid #888; border-bottom: 0; }
.panel-foot { height: 21px; flex: none; display: flex; align-items: center; gap: 13px; padding: 0 1px 0 4px; border-top: 1px solid #333; }
.panel-foot span { flex: 1; white-space: nowrap; }
.panel-base { height: 7px; flex: none; border-top: 1px solid #333; }
.panel-base .grip { margin-top: 1px; }
.wallpaper { height: 4px; flex: none; background: linear-gradient(90deg, #2a2426, #3c3f4a 15%, #1a171c 35%, #2f323e 50%, #16141a 70%, #25242e); }
```
